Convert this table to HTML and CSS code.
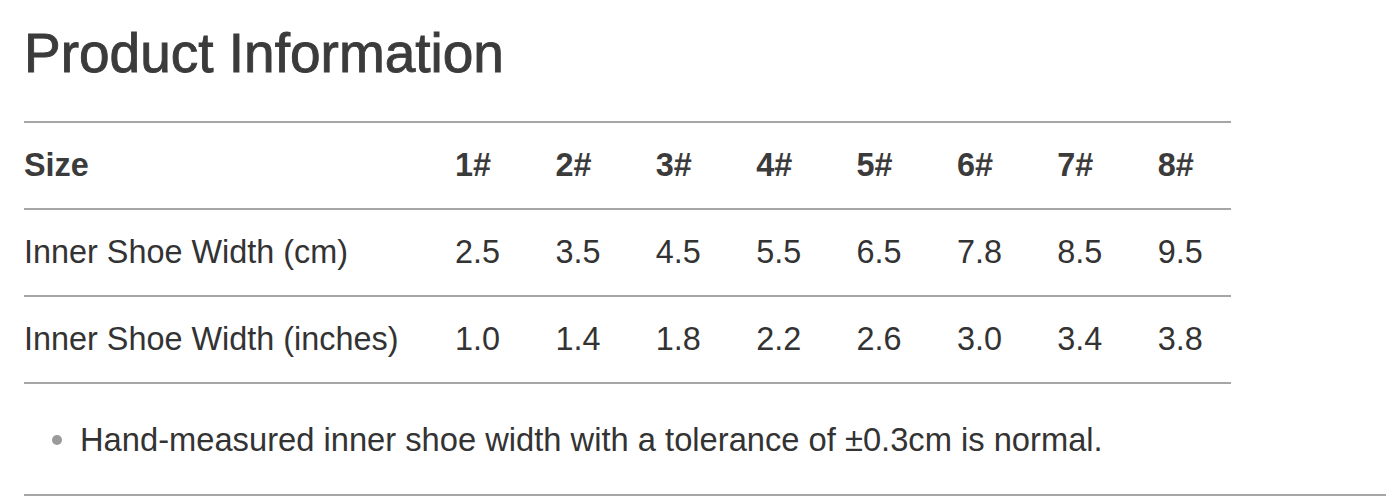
FILE: index.html
```html
<!DOCTYPE html>
<html lang="en">
<head>
<meta charset="utf-8">
<title>Product Information</title>
<link rel="stylesheet" href="styles.css">
</head>
<body>
<main class="page">
  <h2 class="title">Product Information</h2>
  <table class="sizes">
    <colgroup>
      <col class="col-label">
      <col><col><col><col><col><col><col><col>
    </colgroup>
    <thead>
      <tr>
        <th>Size</th><th>1#</th><th>2#</th><th>3#</th><th>4#</th><th>5#</th><th>6#</th><th>7#</th><th>8#</th>
      </tr>
    </thead>
    <tbody>
      <tr>
        <td>Inner Shoe Width (cm)</td><td>2.5</td><td>3.5</td><td>4.5</td><td>5.5</td><td>6.5</td><td>7.8</td><td>8.5</td><td>9.5</td>
      </tr>
      <tr>
        <td>Inner Shoe Width (inches)</td><td>1.0</td><td>1.4</td><td>1.8</td><td>2.2</td><td>2.6</td><td>3.0</td><td>3.4</td><td>3.8</td>
      </tr>
    </tbody>
  </table>
  <ul class="notes">
    <li>Hand-measured inner shoe width with a tolerance of ±0.3cm is normal.</li>
  </ul>
  <div class="rule"></div>
</main>
</body>
</html>
```

FILE: styles.css
```css
html, body {
  margin: 0;
  padding: 0;
  background: #ffffff;
  overflow: hidden;
}

body {
  font-family: "Liberation Sans", Arial, Helvetica, sans-serif;
  color: #333333;
}

.page {
  padding: 20px 0 0 24px;
}

.title {
  margin: 0;
  font-size: 55px;
  font-weight: 400;
  line-height: 66px;
  color: #3b3b3b;
  -webkit-text-stroke: 0.9px #3b3b3b;
}

.sizes {
  margin-top: 35px;
  width: 1207px;
  table-layout: fixed;
  border-collapse: collapse;
  border-top: 2px solid #a6a6a6;
  font-size: 32.4px;
  line-height: 37px;
}

.col-label {
  width: 404px;
}

.sizes th,
.sizes td {
  padding: 24px 0 24px 27px;
  text-align: left;
  white-space: nowrap;
  border-bottom: 2px solid #a6a6a6;
}

.sizes th:first-child,
.sizes td:first-child {
  padding-left: 0;
}

.sizes th {
  font-weight: 700;
  color: #3b3b3b;
}

.sizes td {
  font-weight: 400;
}

.notes {
  list-style: none;
  margin: 37px 0 0 0;
  padding: 0 0 0 28px;
  font-size: 32.7px;
  line-height: 37px;
}

.notes li {
  display: flex;
  align-items: center;
  gap: 18px;
}

.notes li::before {
  content: "";
  flex: none;
  width: 10px;
  height: 10px;
  border-radius: 50%;
  background: #9a9a9a;
}

.rule {
  margin-top: 36px;
  height: 0;
  border-top: 2px solid #a6a6a6;
}
```
